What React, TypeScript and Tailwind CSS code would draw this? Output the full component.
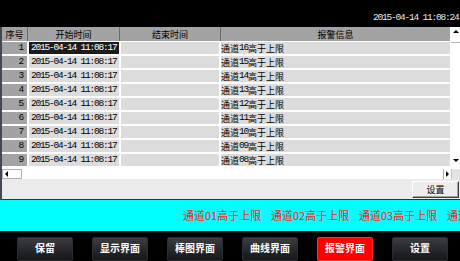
import React from "react";

const CJK = '"Noto Sans CJK SC", "Noto Sans", sans-serif';

function Mixed({ text, size, mono = true }: { text: string; size: number; mono?: boolean }) {
  const parts = text.match(/[\x00-\x7f]+|[^\x00-\x7f]+/g) || [];
  return (
    <>
      {parts.map((p, i) =>
        /[\x00-\x7f]/.test(p[0]) && mono ? (
          <span
            key={i}
            style={{ fontFamily: '"Liberation Mono", monospace', fontSize: size + 0.5, letterSpacing: -(size + 0.5) * 0.6 + size / 2 }}
          >
            {p}
          </span>
        ) : (
          <span key={i} style={{ fontFamily: CJK, fontSize: size }}>
            {p}
          </span>
        )
      )}
    </>
  );
}

const rows = [16, 15, 14, 13, 12, 11, 10, 9, 8];

export default function App() {
  return (
    <div className="w-[460px] h-[261px] bg-black flex flex-col overflow-hidden leading-none">
      {/* top bar */}
      <div className="h-[28px] flex items-center justify-end pl-[373px] text-[#e8e8e8] whitespace-nowrap overflow-hidden pt-[1px]">
        <div className="w-[87px] shrink-0">
          <Mixed text="2015-04-14 11:08:24" size={9} />
        </div>
      </div>

      {/* main panel */}
      <div className="h-[173px] flex flex-col bg-white border-l-2 border-[#404858]">
        <div className="h-[142px] flex">
          <div className="w-[448px] flex flex-col">
            <div className="h-[14px] flex bg-[#a3a3a3] text-black">
              <div className="w-[26px] border-r border-[#6b6b6b] flex items-center justify-center">
                <Mixed text="序号" size={9} />
              </div>
              <div className="w-[92px] border-r border-[#6b6b6b] flex items-center justify-center">
                <Mixed text="开始时间" size={9} />
              </div>
              <div className="w-[101px] border-r border-[#6b6b6b] flex items-center justify-center">
                <Mixed text="结束时间" size={9} />
              </div>
              <div className="flex-1 flex items-center justify-center">
                <Mixed text="报警信息" size={9} />
              </div>
            </div>
            <div className="h-[1px]" />
            {rows.map((ch, i) => (
              <div key={i} className="grid grid-cols-[25px_90px_98px_229px] gap-x-[2px] h-[12px] mb-[2px] text-black">
                <div className="bg-[#a3a3a3] flex items-center justify-end pr-[4px]">
                  <Mixed text={String(i + 1)} size={9} />
                </div>
                <div
                  className={
                    "flex items-center pl-[2px] whitespace-nowrap " +
                    (i === 0 ? "bg-[#1c1c1c] text-white" : "bg-[#dcdcdc]")
                  }
                >
                  <Mixed text="2015-04-14 11:08:17" size={9} />
                </div>
                <div className="bg-[#dcdcdc]" />
                <div className="bg-[#dcdcdc] flex items-center whitespace-nowrap">
                  <Mixed text={"通道" + String(ch).padStart(2, "0") + "高于上限"} size={9} />
                </div>
              </div>
            ))}
          </div>
          <div className="w-[1px]" />
          {/* vertical scrollbar */}
          <div className="w-[9px] flex flex-col">
            <div className="h-[16px] border-b border-[#b0b0b0] flex items-start justify-center pt-[3px]">
              <div className="w-0 h-0 border-l-[3px] border-r-[3px] border-b-[3px] border-l-transparent border-r-transparent border-b-black" />
            </div>
            <div className="flex-1" />
            <div className="h-[10px] flex items-start justify-center">
              <div className="w-0 h-0 border-l-[3px] border-r-[3px] border-t-[3px] border-l-transparent border-r-transparent border-t-black" />
            </div>
          </div>
        </div>

        {/* horizontal scrollbar */}
        <div className="h-[10px] flex items-stretch">
          <div className="w-[20px] border border-[#b0b0b0] flex items-center pl-[2px]">
            <div className="w-0 h-0 border-t-[3px] border-b-[3px] border-r-[3px] border-t-transparent border-b-transparent border-r-black" />
          </div>
          <div className="flex-1" />
          <div className="w-[8px] border-l border-[#b0b0b0] flex items-center justify-center">
            <div className="w-0 h-0 border-t-[3px] border-b-[3px] border-l-[3px] border-t-transparent border-b-transparent border-l-black" />
          </div>
          <div className="w-[9px] bg-[#e4e4e4] border-l border-[#c0c0c0]" />
        </div>

        {/* gray area */}
        <div className="h-[20px] bg-[#ebebeb] flex justify-end items-center pr-[1px]">
          <div className="w-[47px] h-[17px] bg-[#ececec] border border-t-white border-l-white border-r-[#404040] border-b-[#404040] shadow-[inset_-1px_-1px_0_#a0a0a0] flex items-center justify-center text-black">
            <Mixed text="设置" size={9} />
          </div>
        </div>
        <div className="h-[1px] bg-[#303030]" />
      </div>

      {/* cyan marquee */}
      <div className="h-[32px] bg-[#00ffff] flex items-center pl-[183px] overflow-hidden whitespace-nowrap text-[#ff1a1a]">
        {["01", "02", "03", "04"].map((c) => (
          <div key={c} className="w-[88px] shrink-0 text-[11px]" style={{ fontFamily: CJK }}>
            {"通道" + c + "高于上限"}
          </div>
        ))}
      </div>

      {/* bottom bar */}
      <div className="flex-1 flex items-start pt-[6px] pl-[17px] gap-[19px]">
        {["保留", "显示界面", "棒图界面", "曲线界面", "报警界面", "设置"].map((t) => (
          <div
            key={t}
            className={
              "w-[56px] h-[24px] shrink-0 rounded-[2px] flex items-center justify-center text-[10px] font-bold text-white pb-[2px] " +
              (t === "报警界面"
                ? "bg-[#ff0000] border border-[#ff3030]"
                : "bg-gradient-to-b from-[#3a3d42] to-[#15171a] border border-[#2a2c30]")
            }
            style={{ fontFamily: CJK }}
          >
            {t}
          </div>
        ))}
      </div>
    </div>
  );
}
